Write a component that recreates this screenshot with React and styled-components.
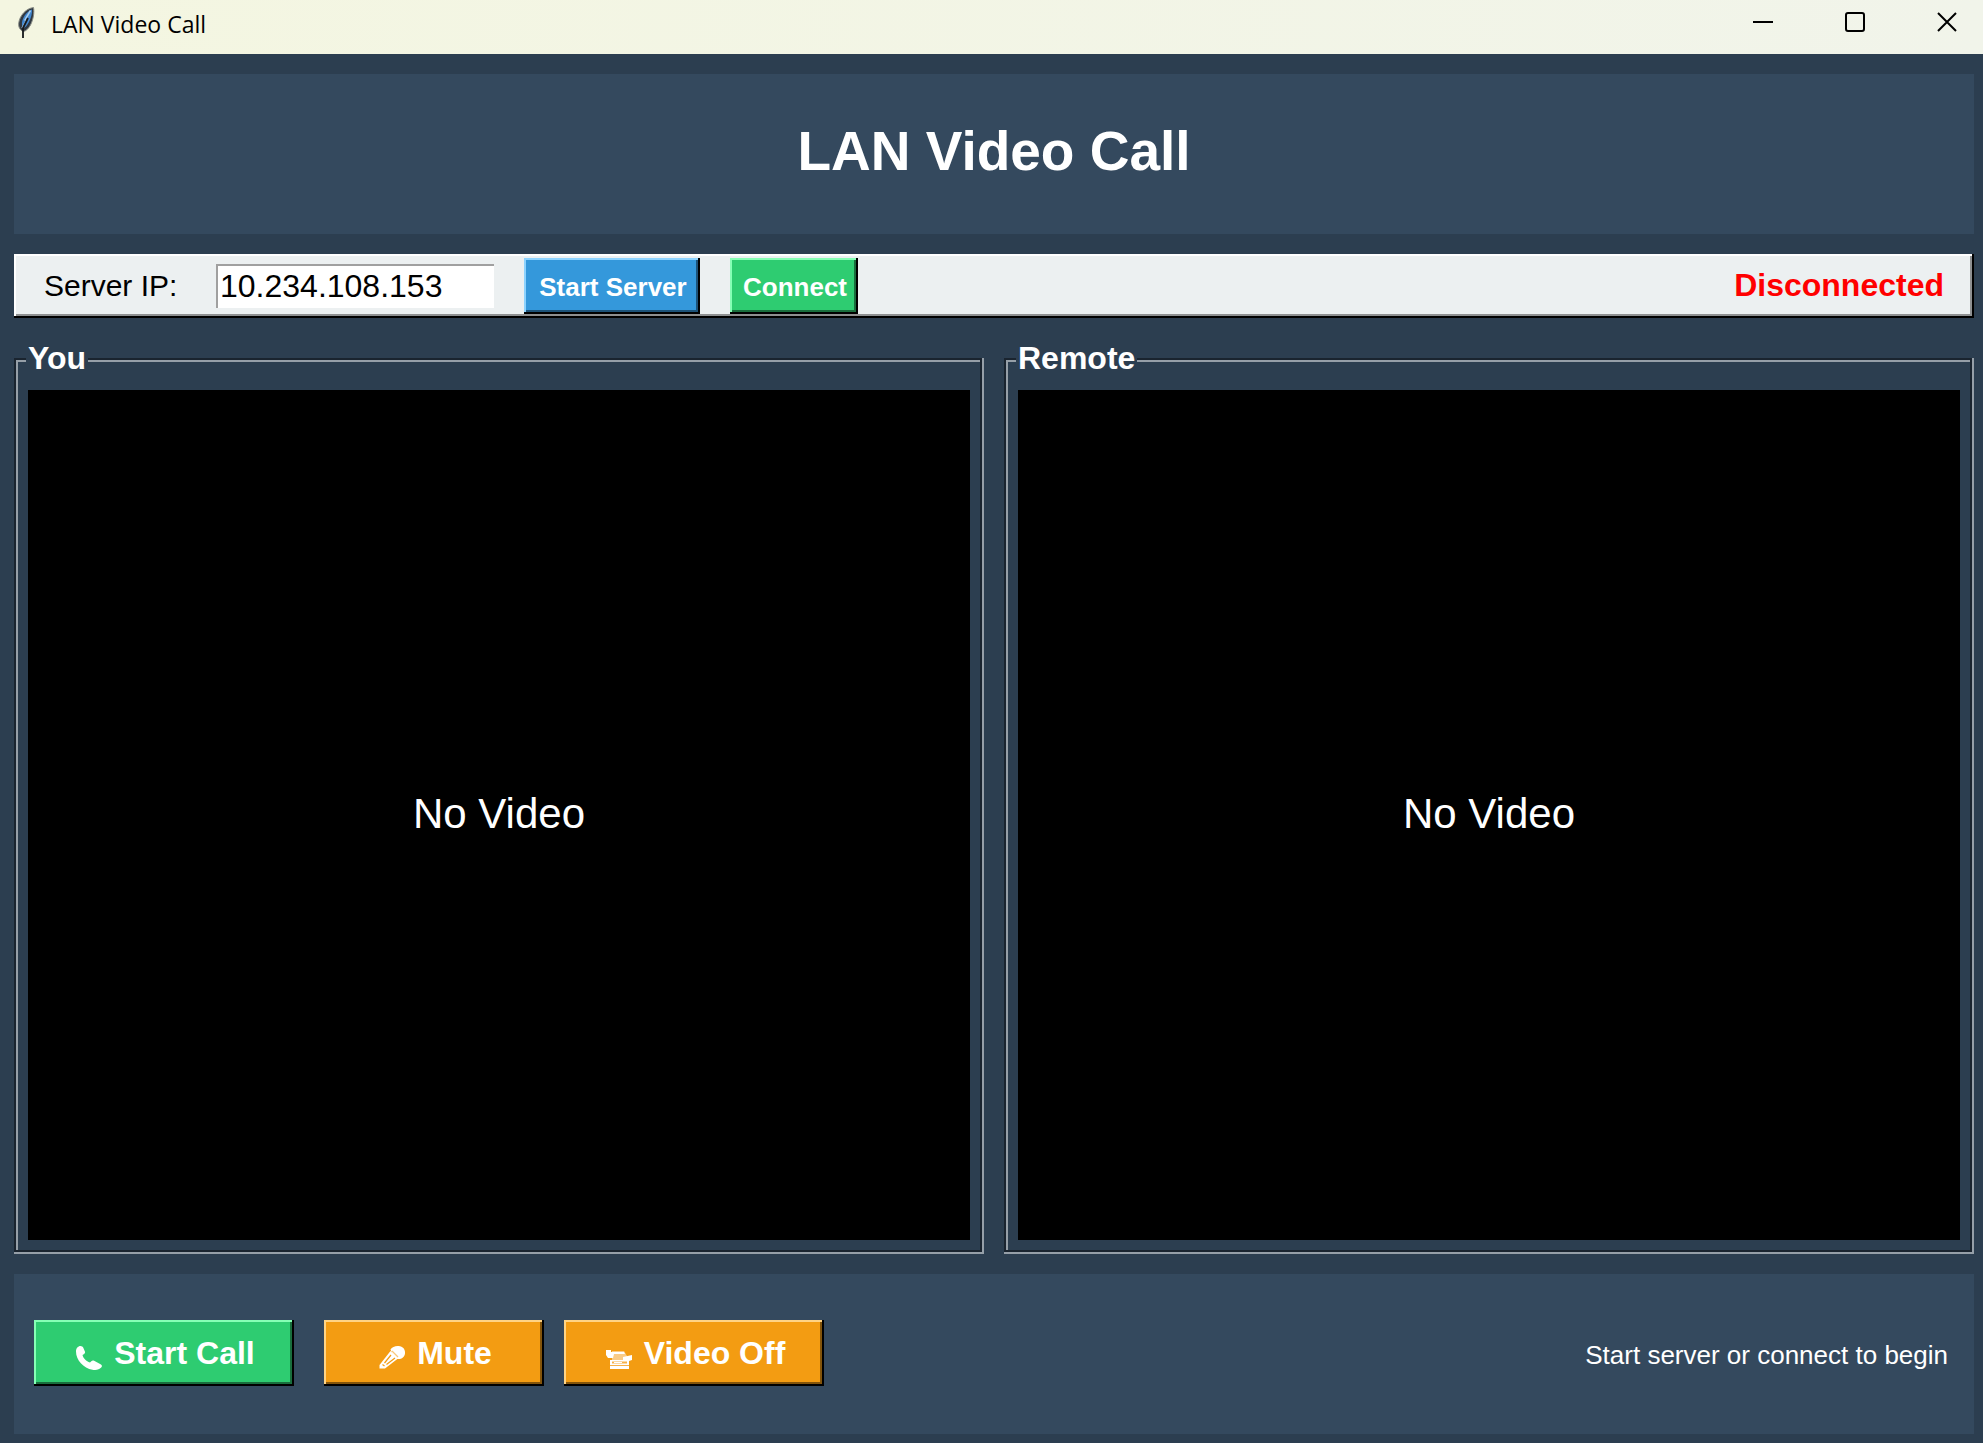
import React, { useState } from "react";
import styled, { createGlobalStyle, css } from "styled-components";

const GlobalStyle = createGlobalStyle`
  * { box-sizing: border-box; }
  body { margin: 0; background: #2c3e50; }
  h1, h2, p { margin: 0; }
`;

const bevel = css`
  box-shadow:
    inset 0 -2px #000,
    inset -2px 0 #000,
    inset 2px 2px ${(p) => p.$light},
    inset -4px -4px ${(p) => p.$shade};
`;

const Window = styled.div`
  min-height: 100vh;
  display: flex;
  flex-direction: column;
  background: #2c3e50;
  font-family: "Liberation Sans", Arial, sans-serif;
  font-size: 32px;
  line-height: 36px;
`;

const TitleBar = styled.header`
  display: flex;
  align-items: flex-start;
  height: 54px;
  padding: 6px 22px 0 16px;
  background: linear-gradient(90deg, #f4f6e1, #f1f4ea);
  color: #000;
`;

const WindowTitle = styled.span`
  flex: 1;
  margin-left: 15px;
  font-family: "Open Sans", "Noto Sans", sans-serif;
  font-size: 23px;
  line-height: 36px;
`;

const WindowButtons = styled.div`
  display: flex;
  gap: 64px;
`;

const WindowButton = styled.button`
  display: flex;
  width: 28px;
  height: 32px;
  padding: 4px;
  border: 0;
  background: none;
  color: #000;
  align-items: center;
`;

const Content = styled.main`
  flex: 1;
  display: flex;
  flex-direction: column;
  padding: 20px 9px 9px 14px;
`;

const Banner = styled.div`
  display: flex;
  align-items: center;
  justify-content: center;
  height: 160px;
  padding-bottom: 6px;
  background: #34495e;
  color: #fff;
`;

const Heading = styled.h1`
  font-size: 55px;
  line-height: 64px;
  font-weight: bold;
`;

const Toolbar = styled.div`
  ${bevel}
  display: flex;
  align-items: center;
  height: 64px;
  margin-top: 20px;
  padding: 0 30px;
  background: #ecf0f1;
`;

const Label = styled.label`
  width: 172px;
  color: #000;
  font-size: 30px;
`;

const AddressInput = styled.input`
  width: 278px;
  height: 44px;
  padding: 0 4px;
  border: 0;
  outline: 0;
  border-radius: 0;
  background: #fff;
  box-shadow: inset 2px 2px #a0a0a0;
  color: #000;
  font: inherit;
`;

const palette = {
  blue: { $face: "#3498db", $light: "#8dd3ff", $shade: "#1c5278" },
  green: { $face: "#2ecc71", $light: "#86ffb5", $shade: "#196e3d" },
  orange: { $face: "#f39c12", $light: "#ffd384", $shade: "#83540a" },
};

const Button = styled.button`
  ${bevel}
  display: flex;
  align-items: center;
  justify-content: center;
  border: 0;
  border-radius: 0;
  background: ${(p) => p.$face};
  color: #fff;
  font-family: inherit;
  font-weight: bold;
  white-space: nowrap;
`;

const ToolButton = styled(Button)`
  height: 56px;
  width: ${(p) => p.$width}px;
  margin-left: 30px;
  padding: 2px 0 0 2px;
  font-size: 26px;
`;

const Status = styled.p`
  margin-left: auto;
  padding-bottom: 2px;
  color: #f00;
  font-weight: bold;
`;

const Videos = styled.div`
  flex: 1;
  display: grid;
  grid-template-columns: 1fr 1fr;
  gap: 20px;
  padding-top: 22px;
`;

const Panel = styled.section`
  display: flex;
  flex-direction: column;
`;

const PanelTitle = styled.h2`
  position: relative;
  align-self: flex-start;
  margin: 0 0 -18px 12px;
  padding: 0 2px;
  background: #2c3e50;
  color: #fff;
  font-size: 32px;
  font-weight: bold;
`;

const Groove = styled.div`
  flex: 1;
  display: flex;
  padding: 32px 14px 14px;
  box-shadow:
    inset 0 -2px #969fa8,
    inset -2px 0 #969fa8,
    inset 2px 2px #1a242f,
    inset -4px -4px #1a242f,
    inset 4px 4px #969fa8;
`;

const Screen = styled.div`
  flex: 1;
  display: flex;
  align-items: center;
  justify-content: center;
  min-height: 240px;
  padding-bottom: 2px;
  background: #000;
  color: #fff;
  font-size: 42px;
  line-height: 48px;
`;

const Controls = styled.footer`
  display: flex;
  align-items: center;
  height: 160px;
  margin-top: 20px;
  padding: 0 26px 2px 20px;
  background: #34495e;
`;

const CallButton = styled(Button)`
  width: ${(p) => p.$width}px;
  height: 66px;
  margin-right: ${(p) => p.$gap}px;
  padding: 0 0 0 2px;
  gap: 11px;
  font-size: 32px;
`;

const Hint = styled.p`
  margin-left: auto;
  padding-top: 4px;
  color: #fff;
  font-size: 26px;
`;

const Feather = () => (
  <svg width="20" height="34" viewBox="0 0 20 34" aria-hidden="true">
    <path d="M17.5 1.5c1 5-.2 12-3 17.500c-2 3.600-4.500 6-7 6.500c-3-1-5.500-4-4.700-9c1-6.500 6.700-14 14.700-15z" fill="#303841" stroke="#8b8f88" strokeWidth="1" />
    <path d="M16 3.500c.3 4-1 9-3.300 13c-1.700 3-3.200 5-5 5.500c-1.900-1.500-2.200-4.500-1.300-7.500c1.500-4.700 5-9.400 9.600-11z" fill="#4287cf" />
    <path d="M14.500 4.500L9 14l1 1l-4 7" fill="none" stroke="#a8cdec" strokeWidth="1.500" />
    <path d="M12 12l-5 10v10" fill="none" stroke="#17191c" strokeWidth="1.800" />
  </svg>
);

const PhoneIcon = () => (
  <svg width="28" height="34" viewBox="0 0 28 34" fill="currentColor" aria-hidden="true">
    <path d="M1 15.500C1 12.300 3 10 5.500 10c1.300 0 2.300.7 2.800 1.800l1.700 4c.3 1-.2 1.900-1.200 2.500l-1.300.8c.8 3.300 3.700 6.300 7.500 7.400l1.300-1.300c.8-.8 1.800-.9 2.800-.4l6.900 3.700c1.200.7 1.200 1.900.2 3c-2 2.200-5.200 2.900-8.700 2.300C8.500 32.300 1 24 1 15.500z" />
  </svg>
);

const MicIcon = () => (
  <svg width="28" height="34" viewBox="0 0 28 34" aria-hidden="true">
    <path d="M12.500 13.500c1.500-2.500 4.500-3.700 8-3.500c4.500.3 7 3.500 6.500 7.500c-.4 3.500-3 5.500-6.500 5.500c-2.500 0-5-2-8-9.500z" fill="currentColor" />
    <path d="M12.500 15L1.500 29v3.500H7L20 22.500z" fill="currentColor" />
    <path d="M13 19l-6.500 8M17 22l-8.500 6.500M4.500 28.500l2 1.500" stroke="#f39c12" strokeWidth="1.200" />
    <path d="M14 15l6 6" stroke="#f9c77a" strokeWidth="1.200" />
  </svg>
);

const CameraIcon = () => (
  <svg width="28" height="34" viewBox="0 0 28 34" aria-hidden="true">
    <path d="M7 15h12l3 5v6H7z" fill="#f9cb87" />
    <path d="M1 14h5v2h13l1 2H9l-1 4H3l-2-3z" fill="currentColor" />
    <path d="M18 21l9-2v5l-3 1v8H5v-9h13z" fill="currentColor" />
    <path d="M7 25.500h15v2H7z" fill="#f6b048" />
    <path d="M9 26.500h8" stroke="#fff" strokeWidth="1" />
    <path d="M5 29.500h19" stroke="#f6b048" strokeWidth="1" />
  </svg>
);

const glyphs = {
  Minimize: <path d="M0 10h20" />,
  Maximize: <rect x="1" y="1" width="18" height="18" rx="2" />,
  Close: <path d="M1 1l18 18M19 1L1 19" />,
};

const VideoPanel = ({ title }) => (
  <Panel>
    <PanelTitle>{title}</PanelTitle>
    <Groove>
      <Screen>No Video</Screen>
    </Groove>
  </Panel>
);

export default function App() {
  const [address, setAddress] = useState("10.234.108.153");
  return (
    <Window>
      <GlobalStyle />
      <TitleBar>
        <Feather />
        <WindowTitle>LAN Video Call</WindowTitle>
        <WindowButtons>
          {Object.entries(glyphs).map(([name, glyph]) => (
            <WindowButton key={name} type="button" aria-label={name}>
              <svg width="20" height="20" viewBox="0 0 20 20" fill="none" stroke="currentColor" strokeWidth="2">
                {glyph}
              </svg>
            </WindowButton>
          ))}
        </WindowButtons>
      </TitleBar>
      <Content>
        <Banner>
          <Heading>LAN Video Call</Heading>
        </Banner>
        <Toolbar $light="#fff" $shade="#8e9091">
          <Label htmlFor="server-ip">Server IP:</Label>
          <AddressInput id="server-ip" value={address} onChange={(e) => setAddress(e.target.value)} />
          <ToolButton type="button" $width={176} {...palette.blue}>Start Server</ToolButton>
          <ToolButton type="button" $width={128} {...palette.green}>Connect</ToolButton>
          <Status>Disconnected</Status>
        </Toolbar>
        <Videos>
          <VideoPanel title="You" />
          <VideoPanel title="Remote" />
        </Videos>
        <Controls>
          <CallButton type="button" $width={260} $gap={30} {...palette.green}>
            <PhoneIcon />
            Start Call
          </CallButton>
          <CallButton type="button" $width={220} $gap={20} {...palette.orange}>
            <MicIcon />
            Mute
          </CallButton>
          <CallButton type="button" $width={260} $gap={20} {...palette.orange}>
            <CameraIcon />
            Video Off
          </CallButton>
          <Hint>Start server or connect to begin</Hint>
        </Controls>
      </Content>
    </Window>
  );
}
